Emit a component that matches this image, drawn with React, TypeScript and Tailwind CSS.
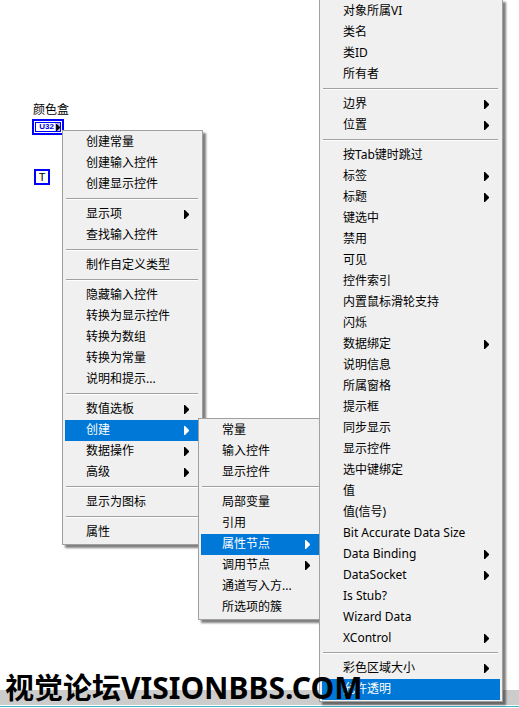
type Item = { label: string; sub?: boolean; active?: boolean };
type Entry = Item | null;

const item = (label: string): Item => ({ label });
const sub = (label: string, active = false): Item => ({ label, sub: true, active });

// null is a separator
const controlMenu: Entry[] = [
  item('创建常量'),
  item('创建输入控件'),
  item('创建显示控件'),
  null,
  sub('显示项'),
  item('查找输入控件'),
  null,
  item('制作自定义类型'),
  null,
  item('隐藏输入控件'),
  item('转换为显示控件'),
  item('转换为数组'),
  item('转换为常量'),
  item('说明和提示...'),
  null,
  sub('数值选板'),
  sub('创建', true),
  sub('数据操作'),
  sub('高级'),
  null,
  item('显示为图标'),
  null,
  item('属性'),
];

const createMenu: Entry[] = [
  item('常量'),
  item('输入控件'),
  item('显示控件'),
  null,
  item('局部变量'),
  item('引用'),
  sub('属性节点', true),
  sub('调用节点'),
  item('通道写入方...'),
  item('所选项的簇'),
];

const propertyMenu: Entry[] = [
  item('对象所属VI'),
  item('类名'),
  item('类ID'),
  item('所有者'),
  null,
  sub('边界'),
  sub('位置'),
  null,
  item('按Tab键时跳过'),
  sub('标签'),
  sub('标题'),
  item('键选中'),
  item('禁用'),
  item('可见'),
  item('控件索引'),
  item('内置鼠标滑轮支持'),
  item('闪烁'),
  sub('数据绑定'),
  item('说明信息'),
  item('所属窗格'),
  item('提示框'),
  item('同步显示'),
  item('显示控件'),
  item('选中键绑定'),
  item('值'),
  item('值(信号)'),
  item('Bit Accurate Data Size'),
  sub('Data Binding'),
  sub('DataSocket'),
  item('Is Stub?'),
  item('Wizard Data'),
  sub('XControl'),
  null,
  sub('彩色区域大小'),
  { label: '允许透明', active: true },
];

const Arrow = ({ className }: { className: string }) => (
  <svg className={className} viewBox="0 0 5 9" fill="currentColor" aria-hidden="true">
    <path d="M0 0 H1 L5 4 V5 L1 9 H0 Z" />
  </svg>
);

const Menu = ({ label, entries, className }: { label: string; entries: Entry[]; className: string }) => (
  <div
    role="menu"
    aria-label={label}
    className={`absolute border border-[#a0a0a0] bg-[#f0f0f0] px-[2px] py-px shadow-[3px_3px_2px_0px_rgba(0,0,0,0.5)] ${className}`}
  >
    {entries.map((entry, i) =>
      entry ? (
        <button
          key={entry.label}
          type="button"
          role="menuitem"
          aria-haspopup={entry.sub ? 'menu' : undefined}
          className={`flex h-[21px] w-full items-center justify-between pr-[11px] pl-[21px] whitespace-nowrap ${
            entry.active ? 'bg-[#0078d7] text-white' : 'text-black'
          }`}
        >
          <span className="pb-px">{entry.label}</span>
          {entry.sub && <Arrow className="h-[9px] w-[5px]" />}
        </button>
      ) : (
        <div key={i} role="separator" className="h-[9px] pt-[3px] pr-[2px] pl-px">
          <div className="h-[2px] border-t border-[#a0a0a0] bg-white" />
        </div>
      )
    )}
  </div>
);

export default function App() {
  return (
    <div className="relative flex min-h-screen flex-col overflow-hidden bg-white font-['Noto_Sans','Noto_Sans_CJK_SC',sans-serif] text-[12px] leading-[18px] text-black">
      <main className="flex grow flex-col items-start gap-[34px] px-8 pt-[101px]">
        <div>
          <div className="px-px">颜色盒</div>
          <div className="flex h-4 w-8 border-2 border-[#0000ff] p-px">
            <div className="flex grow items-center justify-end border border-[#0000ff] font-['Liberation_Sans',sans-serif] text-[8px] font-bold text-[#0000e0]">
              <span className="pr-px">U32</span>
              <span className="flex h-full items-center bg-[#b4b4ff] pl-px text-black">
                <Arrow className="h-[7px] w-1" />
              </span>
            </div>
          </div>
        </div>
        <div className="ml-[2px] flex size-4 items-center justify-center border-2 border-[#0000ff] font-['Liberation_Sans',sans-serif] text-[11px]">
          T
        </div>
      </main>

      <footer className="h-[18px] bg-[#cccccc]">
        <div className="mt-[15px] h-[3px] border-t border-b border-white bg-[#40b4c4]" />
      </footer>

      <Menu label="控件" entries={controlMenu} className="top-[130px] left-[62px] w-[141px]" />
      <Menu label="创建" entries={createMenu} className="top-[418px] left-[198px] w-[126px]" />
      <Menu label="属性节点" entries={propertyMenu} className="-top-px left-[319px] w-[184px]" />

      <div className="pointer-events-none absolute bottom-0 left-[5px] text-[29px] leading-[40px] font-bold whitespace-nowrap">
        视觉论坛<span className="text-[30px]">VISIONBBS.COM</span>
      </div>
    </div>
  );
}
